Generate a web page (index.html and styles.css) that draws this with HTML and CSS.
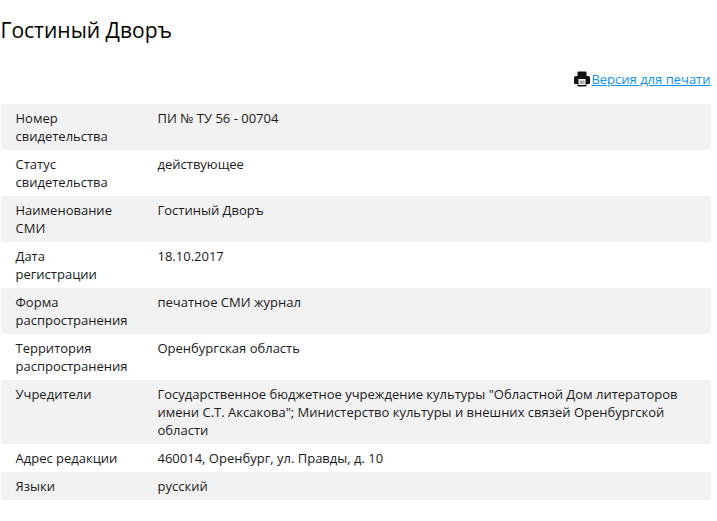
FILE: index.html
```html
<!DOCTYPE html>
<html lang="ru">
<head>
<meta charset="utf-8">
<title>Гостиный Дворъ</title>
<link rel="stylesheet" href="styles.css">
</head>
<body>
<h1 class="title">Гостиный Дворъ</h1>
<div class="print-row">
<svg class="print-icon" viewBox="0 0 16 16" width="16" height="16"><path d="M3.500 1.500a1 1 0 0 1 1-1h7a1 1 0 0 1 1 1V5h-9zM2 5h12a2 2 0 0 1 2 2v5a1 1 0 0 1-1 1h-2.500v1.500a1 1 0 0 1-1 1h-7a1 1 0 0 1-1-1V13H1a1 1 0 0 1-1-1V7a2 2 0 0 1 2-2zM4.500 8v6h7V8z" fill="#111" fill-rule="evenodd"/><path d="M5.500 9.500h5v3.500h-5z" fill="#aaa"/></svg>
<a class="print-link" href="#">Версия для печати</a>
</div>
<div class="table">
<div class="row"><div class="key">Номер свидетельства</div><div class="val">ПИ № ТУ 56 - 00704</div></div>
<div class="row"><div class="key">Статус свидетельства</div><div class="val">действующее</div></div>
<div class="row"><div class="key">Наименование СМИ</div><div class="val">Гостиный Дворъ</div></div>
<div class="row"><div class="key">Дата регистрации</div><div class="val">18.10.2017</div></div>
<div class="row"><div class="key">Форма распространения</div><div class="val">печатное СМИ журнал</div></div>
<div class="row"><div class="key">Территория распространения</div><div class="val">Оренбургская область</div></div>
<div class="row"><div class="key">Учредители</div><div class="val">Государственное бюджетное учреждение культуры "Областной Дом литераторов имени С.Т. Аксакова"; Министерство культуры и внешних связей Оренбургской области</div></div>
<div class="row"><div class="key">Адрес редакции</div><div class="val">460014, Оренбург, ул. Правды, д. 10</div></div>
<div class="row"><div class="key">Языки</div><div class="val">русский</div></div>
</div>
</body>
</html>
```
FILE: styles.css
```css
html, body { margin: 0; padding: 0; background: #fff; }
body { font-family: "Open Sans", sans-serif; font-size: 13px; line-height: 18px; color: #1a1a1a; padding: 0 6px 0 1px; }
.title { margin: 0; padding-top: 15px; margin-left: -0.5px; font-size: 21px; line-height: 30px; font-weight: 400; color: #000; }
.print-row { display: flex; justify-content: flex-end; align-items: center; gap: 1px; margin-top: 22px; height: 24px; padding-right: 0.5px; }
.print-icon { display: block; }
.print-link { font-size: 13px; color: #0f93ea; text-decoration: underline; text-underline-offset: 1px; }
.table { margin-top: 13px; }
.row { display: flex; padding: 5px 0; }
.row:nth-child(odd) { background: #f2f2f2; }
.key { width: 156.5px; box-sizing: border-box; padding: 0 28.500px 0 14.500px; flex: none; }
.val { flex: 1; padding-right: 30px; }
```
